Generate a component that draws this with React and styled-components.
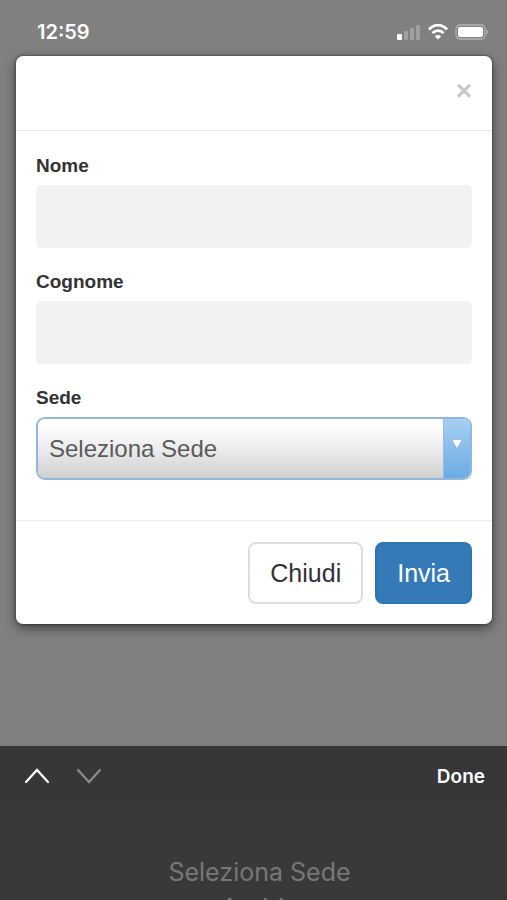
import React from "react";
import styled, {createGlobalStyle} from "styled-components";

const GlobalStyle = createGlobalStyle`
  * {
    box-sizing: border-box;
  }
  body {
    margin: 0;
    background: #808080;
    font-family: "Liberation Sans", Arial, sans-serif;
    color: #333;
  }
  button, input, select {
    font-family: inherit;
  }
`;

const Screen = styled.div`
  height: 100vh;
  display: flex;
  flex-direction: column;
  overflow: hidden;
`;

const StatusBar = styled.header`
  display: flex;
  flex-shrink: 0;
  justify-content: space-between;
  align-items: center;
  height: 56px;
  padding: 8px 18px 0 37px;
  color: #fff;
  time {
    font-family: Inter, sans-serif;
    font-size: 20px;
    font-weight: 600;
  }
`;

const StatusIcons = styled.div`
  display: flex;
  align-items: center;
  gap: 7px;
  svg {
    display: block;
  }
`;

const Modal = styled.form`
  flex-shrink: 0;
  margin: 0 15px 0 16px;
  background: #fff;
  border-radius: 7px;
  box-shadow: 0 4px 12px rgba(0, 0, 0, 0.5), 0 0 2px 1px rgba(0, 0, 0, 0.25);
`;

const ModalHeader = styled.div`
  display: flex;
  justify-content: flex-end;
  padding: 18px 20px 22px;
  border-bottom: 1px solid #e5e5e5;
`;

const CloseButton = styled.button`
  padding: 0;
  border: 0;
  background: none;
  color: #c8c8c8;
  font-size: 28px;
  font-weight: bold;
  line-height: 34px;
`;

const ModalBody = styled.div`
  padding: 22px 20px 19px;
`;

const Field = styled.div`
  display: flex;
  flex-direction: column;
  gap: 6px;
  margin-bottom: 21px;
  label {
    font-size: 19px;
    font-weight: bold;
    line-height: 26px;
  }
`;

const TextInput = styled.input`
  width: 100%;
  height: 63px;
  padding: 0 14px;
  border: 0;
  border-radius: 5px;
  background: #f2f2f2;
  font-size: 24px;
`;

const SelectBox = styled.div`
  position: relative;
  display: flex;
  height: 63px;
  border: 2px solid #8fb8dc;
  border-radius: 9px;
  overflow: hidden;
  svg {
    position: absolute;
    top: 0;
    right: 0;
    width: 27px;
    height: 100%;
    padding: 21px 8px 30px;
    border-left: 1px solid #8fbfe8;
    background: linear-gradient(#a6cff2, #6cace4);
    pointer-events: none;
  }
`;

const Select = styled.select`
  flex: 1;
  appearance: none;
  padding: 0 40px 0 11px;
  border: 0;
  outline: 0;
  background: linear-gradient(#fff 8%, #ececec 50%, #d0d0d0);
  color: #5a5a5a;
  font-size: 24px;
`;

const ModalFooter = styled.div`
  display: flex;
  justify-content: flex-end;
  gap: 12px;
  padding: 21px 20px 20px;
  border-top: 1px solid #ececec;
`;

const Button = styled.button`
  height: 62px;
  padding: 0 20px;
  border: 2px solid ${({$primary}) => ($primary ? "#2e75b5" : "#dedede")};
  border-radius: 8px;
  background: ${({$primary}) => ($primary ? "#337ab7" : "#fff")};
  color: ${({$primary}) => ($primary ? "#fff" : "#333")};
  font-size: 25px;
`;

const Keyboard = styled.section`
  flex-shrink: 0;
  margin-top: auto;
  background: #393939;
  font-family: Inter, sans-serif;
`;

const Toolbar = styled.div`
  display: flex;
  align-items: center;
  gap: 26px;
  height: 60px;
  padding: 0 22px 0 24px;
  background: #373737;
`;

const ToolbarButton = styled.button`
  padding: 0;
  border: 0;
  background: none;
  color: #fff;
  font-size: 19px;
  font-weight: 600;
  svg {
    display: block;
  }
  &:disabled {
    color: #8c8c8c;
  }
  &:last-child {
    margin-left: auto;
  }
`;

// the wheel is cut by the bottom of the screen
const Picker = styled.ul`
  height: 94px;
  margin: 0;
  padding: 48px 0 0 12px;
  list-style: none;
  overflow: hidden;
  text-align: center;
  color: #777;
  font-size: 25px;
  line-height: 36px;
`;

const places = ["Seleziona Sede", "Andria"];

const SignalIcon = () => (
  <svg width="24" height="16" viewBox="0 0 24 16" fill="#fff" aria-hidden="true">
    <rect x="0" y="10" width="5" height="6" rx="1" />
    <g opacity="0.25">
      <rect x="7" y="7" width="4" height="9" rx="1" />
      <rect x="13" y="4" width="4" height="12" rx="1" />
      <rect x="19" y="1" width="4" height="15" rx="1" />
    </g>
  </svg>
);

const WifiIcon = () => (
  <svg width="20" height="16" viewBox="0 0 20 16" fill="none" stroke="#fff" strokeWidth="2.7" aria-hidden="true">
    <path d="M1 5.5C6-.2 14-.2 19 5.5" />
    <path d="M4.4 9.2c3.2-3.5 8-3.5 11.2 0" />
    <path d="M6.9 12.4c1.7-1.9 4.5-1.9 6.2 0L10 15.6z" fill="#fff" stroke="none" />
  </svg>
);

const BatteryIcon = () => (
  <svg width="34" height="16" viewBox="0 0 34 16" aria-hidden="true">
    <rect x="1" y="1" width="29" height="14" rx="4" fill="none" stroke="#b4b4b4" strokeWidth="1.3" />
    <rect x="3" y="3" width="25" height="10" rx="2" fill="#fff" />
    <path d="M31.5 5.5c2 .8 2 4.2 0 5z" fill="#b4b4b4" />
  </svg>
);

const Chevron = ({d}) => (
  <svg width="26" height="16" viewBox="0 0 26 16" fill="none" stroke="currentColor" strokeWidth="2.2" aria-hidden="true">
    <path d={d} strokeLinecap="round" />
  </svg>
);

const App = () => (
  <Screen>
    <GlobalStyle />
    <StatusBar>
      <time>12:59</time>
      <StatusIcons>
        <SignalIcon />
        <WifiIcon />
        <BatteryIcon />
      </StatusIcons>
    </StatusBar>
    <Modal onSubmit={e => e.preventDefault()}>
      <ModalHeader>
        <CloseButton type="button" aria-label="Chiudi">
          ×
        </CloseButton>
      </ModalHeader>
      <ModalBody>
        <Field>
          <label htmlFor="nome">Nome</label>
          <TextInput id="nome" type="text" />
        </Field>
        <Field>
          <label htmlFor="cognome">Cognome</label>
          <TextInput id="cognome" type="text" />
        </Field>
        <Field>
          <label htmlFor="sede">Sede</label>
          <SelectBox>
            <Select id="sede">
              {places.map(place => (
                <option key={place}>{place}</option>
              ))}
            </Select>
            <svg viewBox="0 0 10 9" aria-hidden="true">
              <path d="M0 0h10L5 9z" fill="#fff" />
            </svg>
          </SelectBox>
        </Field>
      </ModalBody>
      <ModalFooter>
        <Button type="button">Chiudi</Button>
        <Button type="submit" $primary>
          Invia
        </Button>
      </ModalFooter>
    </Modal>
    <Keyboard>
      <Toolbar>
        <ToolbarButton type="button" aria-label="Previous">
          <Chevron d="M2 14 13 2l11 12" />
        </ToolbarButton>
        <ToolbarButton type="button" aria-label="Next" disabled>
          <Chevron d="M2 2l11 12L24 2" />
        </ToolbarButton>
        <ToolbarButton type="button">Done</ToolbarButton>
      </Toolbar>
      <Picker>
        {places.map(place => (
          <li key={place}>{place}</li>
        ))}
      </Picker>
    </Keyboard>
  </Screen>
);

export default App;
